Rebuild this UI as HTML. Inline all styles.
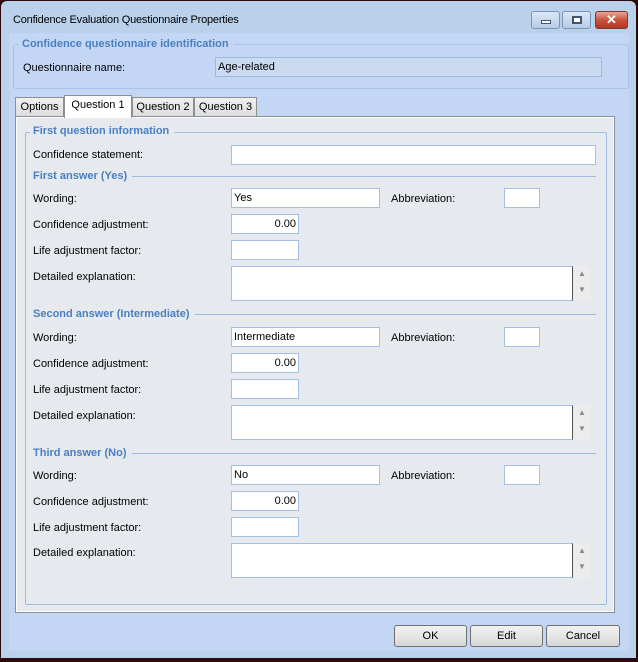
<!DOCTYPE html>
<html><head><meta charset="utf-8"><style>
*{box-sizing:border-box;margin:0;padding:0}
body{width:638px;height:662px;overflow:hidden;background:#2a0a0a;font-family:"Liberation Sans",sans-serif;font-size:11px;color:#000;position:relative}
div{position:absolute}
.frame{left:1px;top:1px;width:635px;height:657px;background:#b9d1ea;border-radius:6px 6px 0 0}
.client{left:9px;top:33px;width:620px;height:618px;background:#c3d7f5}
.lbl{white-space:nowrap;line-height:14px}
.leg{white-space:nowrap;font-weight:bold;color:#4a7fc1;line-height:14px;background:#e6e9ee;padding:0 5px 0 3px}
.in{background:#fff;border:1px solid #a5bfe3;padding:2px 2px 0;line-height:15px;white-space:nowrap}
.hl{height:1px;background:#9dbde0}
.btn{height:22px;border:1px solid #707070;border-radius:3px;background:linear-gradient(#f2f2f2,#e6e6e6 50%,#d6d6d6);text-align:center;line-height:20px}
.tab{height:20px;border:1px solid #8e8f8f;border-bottom:none;background:linear-gradient(#f0f0f0,#dcdcdc);text-align:center;line-height:18px}
.ta{background:#fff;border:1px solid #a5bfe3;border-right:1px solid #555}
.sb{width:16px;background:#ececec;color:#888;font-size:8px;text-align:center}
</style></head><body>
<div class="frame"></div>
<div class="lbl" style="left:13px;top:13px;font-size:11px;letter-spacing:-0.2px">Confidence Evaluation Questionnaire Properties</div>
<div style="left:531px;top:11px;width:29px;height:18px;border:1px solid #7d93b3;border-radius:3px;background:linear-gradient(#dbe7f6,#b8cce6)"><div style="left:9px;top:8px;width:10px;height:4px;background:#fff;border:1px solid #44556c"></div></div>
<div style="left:562px;top:11px;width:29px;height:18px;border:1px solid #7d93b3;border-radius:3px;background:linear-gradient(#dbe7f6,#b8cce6)"><div style="left:9px;top:4px;width:10px;height:8px;border:2px solid #44556c;background:#fff"></div></div>
<div style="left:595px;top:11px;width:33px;height:18px;border:1px solid #7a3b30;border-radius:3px;background:linear-gradient(#e8a496,#c8533d 50%,#b3361f);color:#fff;font-weight:bold;text-align:center;line-height:16px;font-size:13px">✕</div>
<div class="client"></div>
<div style="left:13px;top:44px;width:616px;height:45px;border:1px solid #a9c3e6;border-radius:3px"></div>
<div class="leg" style="left:19px;top:37px;background:#c3d7f5">Confidence questionnaire identification</div>
<div class="lbl" style="left:23px;top:61px">Questionnaire name:</div>
<div class="in" style="left:215px;top:57px;width:387px;height:20px;background:#c9daf1;border-color:#9fb8d8">Age-related</div>
<div class="tab" style="left:15px;top:97px;width:49px">Options</div>
<div class="tab" style="left:132px;top:97px;width:62px">Question 2</div>
<div class="tab" style="left:194px;top:97px;width:63px">Question 3</div>
<div style="left:15px;top:116px;width:600px;height:497px;border:1px solid #8a8f96;background:#e6e9ee;box-shadow:inset 1px 1px 0 #fff, inset -1px -1px 0 #fff"></div>
<div class="tab" style="left:64px;top:95px;width:68px;height:23px;background:#fff;border-color:#8e8f8f">Question 1</div>
<div style="left:25px;top:132px;width:582px;height:473px;border:1px solid #9dbde0;border-radius:2px"></div>
<div class="leg" style="left:30px;top:124px">First question information</div>
<div class="lbl" style="left:33px;top:148px">Confidence statement:</div>
<div class="in" style="left:231px;top:145px;width:365px;height:20px"></div>

<div class="hl" style="left:33px;top:176px;width:563px"></div>
<div class="leg" style="left:30px;top:169px">First answer (Yes)</div>
<div class="lbl" style="left:33px;top:192px">Wording:</div>
<div class="in" style="left:231px;top:188px;width:149px;height:20px">Yes</div>
<div class="lbl" style="left:391px;top:192px">Abbreviation:</div>
<div class="in" style="left:504px;top:188px;width:36px;height:20px"></div>
<div class="lbl" style="left:33px;top:218px">Confidence adjustment:</div>
<div class="in" style="left:231px;top:214px;width:68px;height:20px;text-align:right">0.00</div>
<div class="lbl" style="left:33px;top:244px">Life adjustment factor:</div>
<div class="in" style="left:231px;top:240px;width:68px;height:20px"></div>
<div class="lbl" style="left:33px;top:270px">Detailed explanation:</div>
<div class="ta" style="left:231px;top:266px;width:342px;height:35px"></div>
<div class="sb" style="left:574px;top:266px;height:35px;line-height:16px">▲<br>▼</div>

<div class="hl" style="left:33px;top:314px;width:563px"></div>
<div class="leg" style="left:30px;top:307px">Second answer (Intermediate)</div>
<div class="lbl" style="left:33px;top:331px">Wording:</div>
<div class="in" style="left:231px;top:327px;width:149px;height:20px">Intermediate</div>
<div class="lbl" style="left:391px;top:331px">Abbreviation:</div>
<div class="in" style="left:504px;top:327px;width:36px;height:20px"></div>
<div class="lbl" style="left:33px;top:357px">Confidence adjustment:</div>
<div class="in" style="left:231px;top:353px;width:68px;height:20px;text-align:right">0.00</div>
<div class="lbl" style="left:33px;top:383px">Life adjustment factor:</div>
<div class="in" style="left:231px;top:379px;width:68px;height:20px"></div>
<div class="lbl" style="left:33px;top:409px">Detailed explanation:</div>
<div class="ta" style="left:231px;top:405px;width:342px;height:35px"></div>
<div class="sb" style="left:574px;top:405px;height:35px;line-height:16px">▲<br>▼</div>

<div class="hl" style="left:33px;top:453px;width:563px"></div>
<div class="leg" style="left:30px;top:446px">Third answer (No)</div>
<div class="lbl" style="left:33px;top:469px">Wording:</div>
<div class="in" style="left:231px;top:465px;width:149px;height:20px">No</div>
<div class="lbl" style="left:391px;top:469px">Abbreviation:</div>
<div class="in" style="left:504px;top:465px;width:36px;height:20px"></div>
<div class="lbl" style="left:33px;top:495px">Confidence adjustment:</div>
<div class="in" style="left:231px;top:491px;width:68px;height:20px;text-align:right">0.00</div>
<div class="lbl" style="left:33px;top:521px">Life adjustment factor:</div>
<div class="in" style="left:231px;top:517px;width:68px;height:20px"></div>
<div class="lbl" style="left:33px;top:546px">Detailed explanation:</div>
<div class="ta" style="left:231px;top:543px;width:342px;height:35px"></div>
<div class="sb" style="left:574px;top:543px;height:35px;line-height:16px">▲<br>▼</div>

<div class="btn" style="left:394px;top:625px;width:73px">OK</div>
<div class="btn" style="left:470px;top:625px;width:73px">Edit</div>
<div class="btn" style="left:546px;top:625px;width:74px">Cancel</div>
</body></html>
